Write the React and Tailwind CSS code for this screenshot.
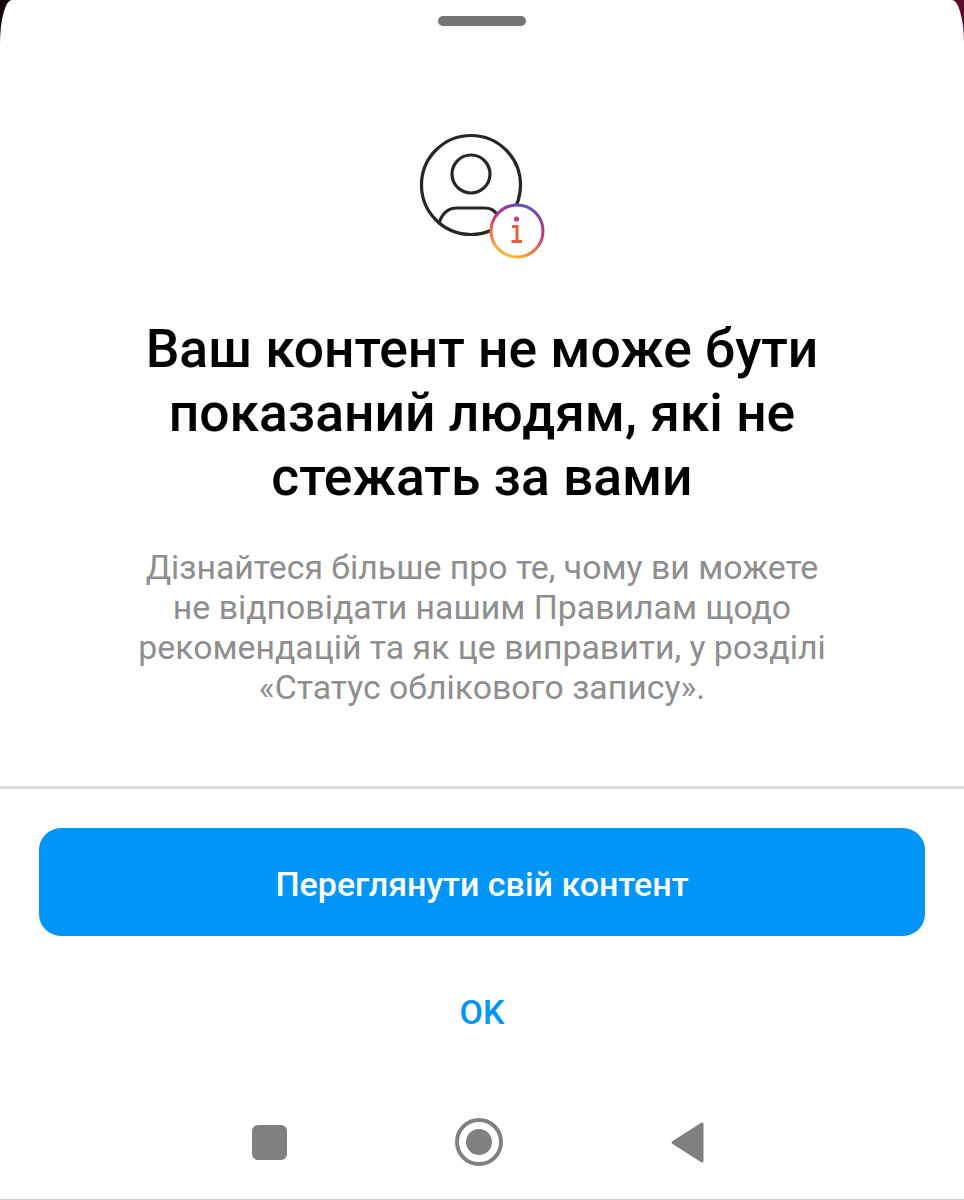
const font = { fontFamily: 'Roboto, sans-serif' };

function ProfileIcon() {
  return (
    <svg width="130" height="130" viewBox="0 0 130 130" fill="none">
      <defs>
        <linearGradient id="ig" x1="0.3" y1="1" x2="0.7" y2="0">
          <stop offset="0" stopColor="#fcc23f" />
          <stop offset="0.25" stopColor="#ee7f3c" />
          <stop offset="0.6" stopColor="#c9307f" />
          <stop offset="1" stopColor="#5f4fc0" />
        </linearGradient>
      </defs>
      <circle cx="55" cy="55" r="49.5" stroke="#262626" strokeWidth="3.2" />
      <circle cx="55" cy="44" r="19" stroke="#262626" strokeWidth="3.2" />
      <path d="M23 93 C26 84 31 78 41 78 L68 78 C75 78 78 80 82 85" stroke="#262626" strokeWidth="3.2" />
      <circle cx="101" cy="101" r="26" fill="#fff" stroke="url(#ig)" strokeWidth="3" />
      <circle cx="100.5" cy="89" r="2.6" fill="#c9367f" />
      <path d="M96 96.5 H101 V111 M95.5 111.5 H106" stroke="#e0603f" strokeWidth="3" />
    </svg>
  );
}

export default function App() {
  return (
    <div className="relative w-[964px] h-[1200px] bg-[linear-gradient(90deg,#140808_50%,#5c0a2c_50%)] overflow-hidden" style={font}>
      <div className="relative w-full h-full bg-white rounded-tl-[12px_44px] rounded-tr-[12px_44px] flex flex-col items-center">
        <div className="w-[88px] h-[10px] mt-4 rounded-full bg-[#747474]" />
        <div className="mt-[104px] ml-[-2px] h-[130px]">
          <ProfileIcon />
        </div>
        <h1 className="mt-[57px] w-[720px] text-center text-[53.4px] leading-[64px] font-medium text-black">
          Ваш контент не може бути показаний людям, які не стежать за вами
        </h1>
        <p className="mt-[39px] w-[700px] text-center text-[33.8px] leading-[40px] text-[#8e8e8e]">
          Дізнайтеся більше про те, чому ви можете не відповідати нашим Правилам щодо рекомендацій та як це виправити, у розділі «Статус облікового запису».
        </p>
        <div className="mt-[78px] w-full h-[3px] bg-[#dedede]" />
        <button className="mt-[39px] w-[886px] h-[108px] pt-1 rounded-[22px] bg-[#0095f6] text-white text-[34px] font-medium">
          Переглянути свій контент
        </button>
        <div className="mt-[56px] text-[34px] leading-[40px] font-medium text-[#0095f6]">OK</div>
        <div className="mt-[86px] ml-[-8px] w-[452px] h-[48px] flex items-center justify-between">
          <div className="w-[35px] h-[35px] rounded-[6px] bg-[#808080]" />
          <div className="w-[48px] h-[48px] rounded-full border-[4px] border-[#808080] flex items-center justify-center">
            <div className="w-[26px] h-[26px] rounded-full bg-[#808080]" />
          </div>
          <svg width="33" height="41" viewBox="0 0 33 41">
            <path d="M31 2 L31 39 L2 20.5 Z" fill="#808080" stroke="#808080" strokeWidth="3" strokeLinejoin="round" />
          </svg>
        </div>
        <div className="absolute left-0 bottom-0 w-full h-[1px] bg-[#d0d0d0]" />
      </div>
    </div>
  );
}
